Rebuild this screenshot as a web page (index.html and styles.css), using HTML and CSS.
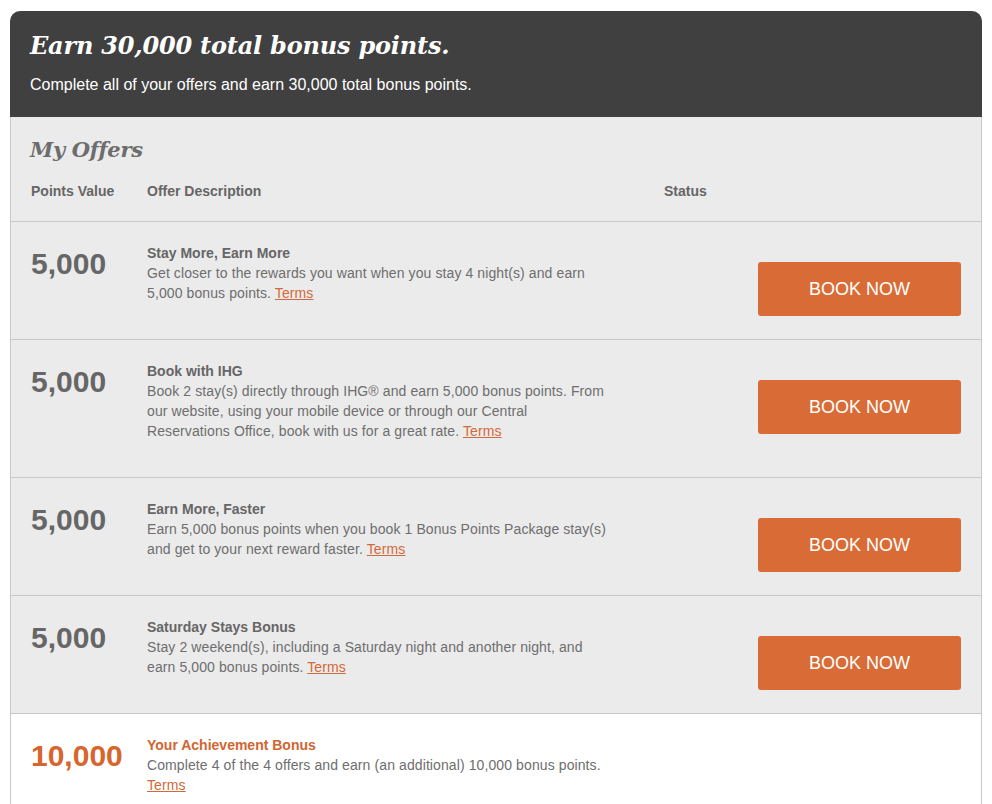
FILE: index.html
```html
<!DOCTYPE html>
<html lang="en">
<head>
  <meta charset="UTF-8" />
  <meta name="viewport" content="width=device-width, initial-scale=1.0"/>
  <title>My Offers</title>
  <link rel="stylesheet" href="styles.css">
</head>
<body>
  <div class="panel">
    <div class="banner">
      <h1>Earn 30,000 total bonus points.</h1>
      <p>Complete all of your offers and earn 30,000 total bonus points.</p>
    </div>

    <div class="offers">
      <h2>My Offers</h2>
      <div class="row head">
        <div>Points Value</div>
        <div>Offer Description</div>
        <div>Status</div>
      </div>

      <div class="row offer">
        <div class="pts">5,000</div>
        <div class="desc">
          <div class="title">Stay More, Earn More</div>
          <p>Get closer to the rewards you want when you stay 4 night(s) and earn 5,000 bonus points. <a href="#">Terms</a></p>
        </div>
        <div class="status"><button>BOOK NOW</button></div>
      </div>

      <div class="row offer">
        <div class="pts">5,000</div>
        <div class="desc">
          <div class="title">Book with IHG</div>
          <p>Book 2 stay(s) directly through IHG&reg; and earn 5,000 bonus points. From our website, using your mobile device or through our Central Reservations Office, book with us for a great rate. <a href="#">Terms</a></p>
        </div>
        <div class="status"><button>BOOK NOW</button></div>
      </div>

      <div class="row offer">
        <div class="pts">5,000</div>
        <div class="desc">
          <div class="title">Earn More, Faster</div>
          <p>Earn 5,000 bonus points when you book 1 Bonus Points Package stay(s) and get to your next reward faster. <a href="#">Terms</a></p>
        </div>
        <div class="status"><button>BOOK NOW</button></div>
      </div>

      <div class="row offer">
        <div class="pts">5,000</div>
        <div class="desc">
          <div class="title">Saturday Stays Bonus</div>
          <p>Stay 2 weekend(s), including a Saturday night and another night, and earn 5,000 bonus points. <a href="#">Terms</a></p>
        </div>
        <div class="status"><button>BOOK NOW</button></div>
      </div>

      <div class="row offer bonus">
        <div class="pts">10,000</div>
        <div class="desc">
          <div class="title">Your Achievement Bonus</div>
          <p>Complete 4 of the 4 offers and earn (an additional) 10,000 bonus points. <a href="#">Terms</a></p>
        </div>
        <div class="status"></div>
      </div>
    </div>
  </div>
</body>
</html>
```

FILE: styles.css
```css
body { margin: 0; padding: 11px 10px 40px 10px; background: #fff; font-family: "Liberation Sans", Arial, sans-serif; color: #666; }
.panel { border-radius: 10px 10px 0 0; overflow: hidden; }
.banner { background: #404040; color: #fff; padding: 19px 20px 22px 20px; }
.banner h1 { margin: 0; font-family: "DejaVu Serif", Georgia, serif; font-style: italic; font-weight: bold; font-size: 24px; line-height: 32px; letter-spacing: -0.2px; }
.banner p { margin: 13px 0 0 0; font-size: 16px; line-height: 20px; }
.offers { background: #ebebeb; border-left: 1px solid #c8c8c8; border-right: 1px solid #c8c8c8; }
.offers h2 { margin: 0; padding: 19px 20px 0 19px; font-family: "DejaVu Serif", Georgia, serif; font-style: italic; font-weight: bold; font-size: 21px; line-height: 28px; color: #6d6d6d; letter-spacing: -0.3px; }
.row { display: grid; grid-template-columns: 116px 517px 1fr; padding: 0 20px; }
.head { font-size: 14px; font-weight: bold; color: #666; padding-top: 17px; padding-bottom: 20px; line-height: 20px; border-bottom: 1px solid #c8c8c8; }
.offer { padding-top: 21px; padding-bottom: 23px; border-bottom: 1px solid #c8c8c8; }
.pts { font-size: 30px; font-weight: bold; line-height: 40px; color: #666; margin-top: 1px; }
.desc { font-size: 14px; line-height: 20px; color: #6e6e6e; max-width: 460px; padding-bottom: 13px; letter-spacing: 0.1px; }
.desc p { margin: 0; }
.desc .title { font-weight: bold; color: #666; letter-spacing: 0; }
.desc a { color: #d2693a; }
.status { display: flex; justify-content: flex-end; align-items: flex-start; }
button { margin-top: 19px; width: 203px; height: 54px; background: #d96c36; color: #fff; border: none; border-radius: 3px; font-family: "Liberation Sans", Arial, sans-serif; font-size: 18px; cursor: pointer; }
.bonus { background: #fff; border-bottom: none; }
.bonus .pts { color: #d6652e; }
.bonus .title { color: #d2652f; }
```
